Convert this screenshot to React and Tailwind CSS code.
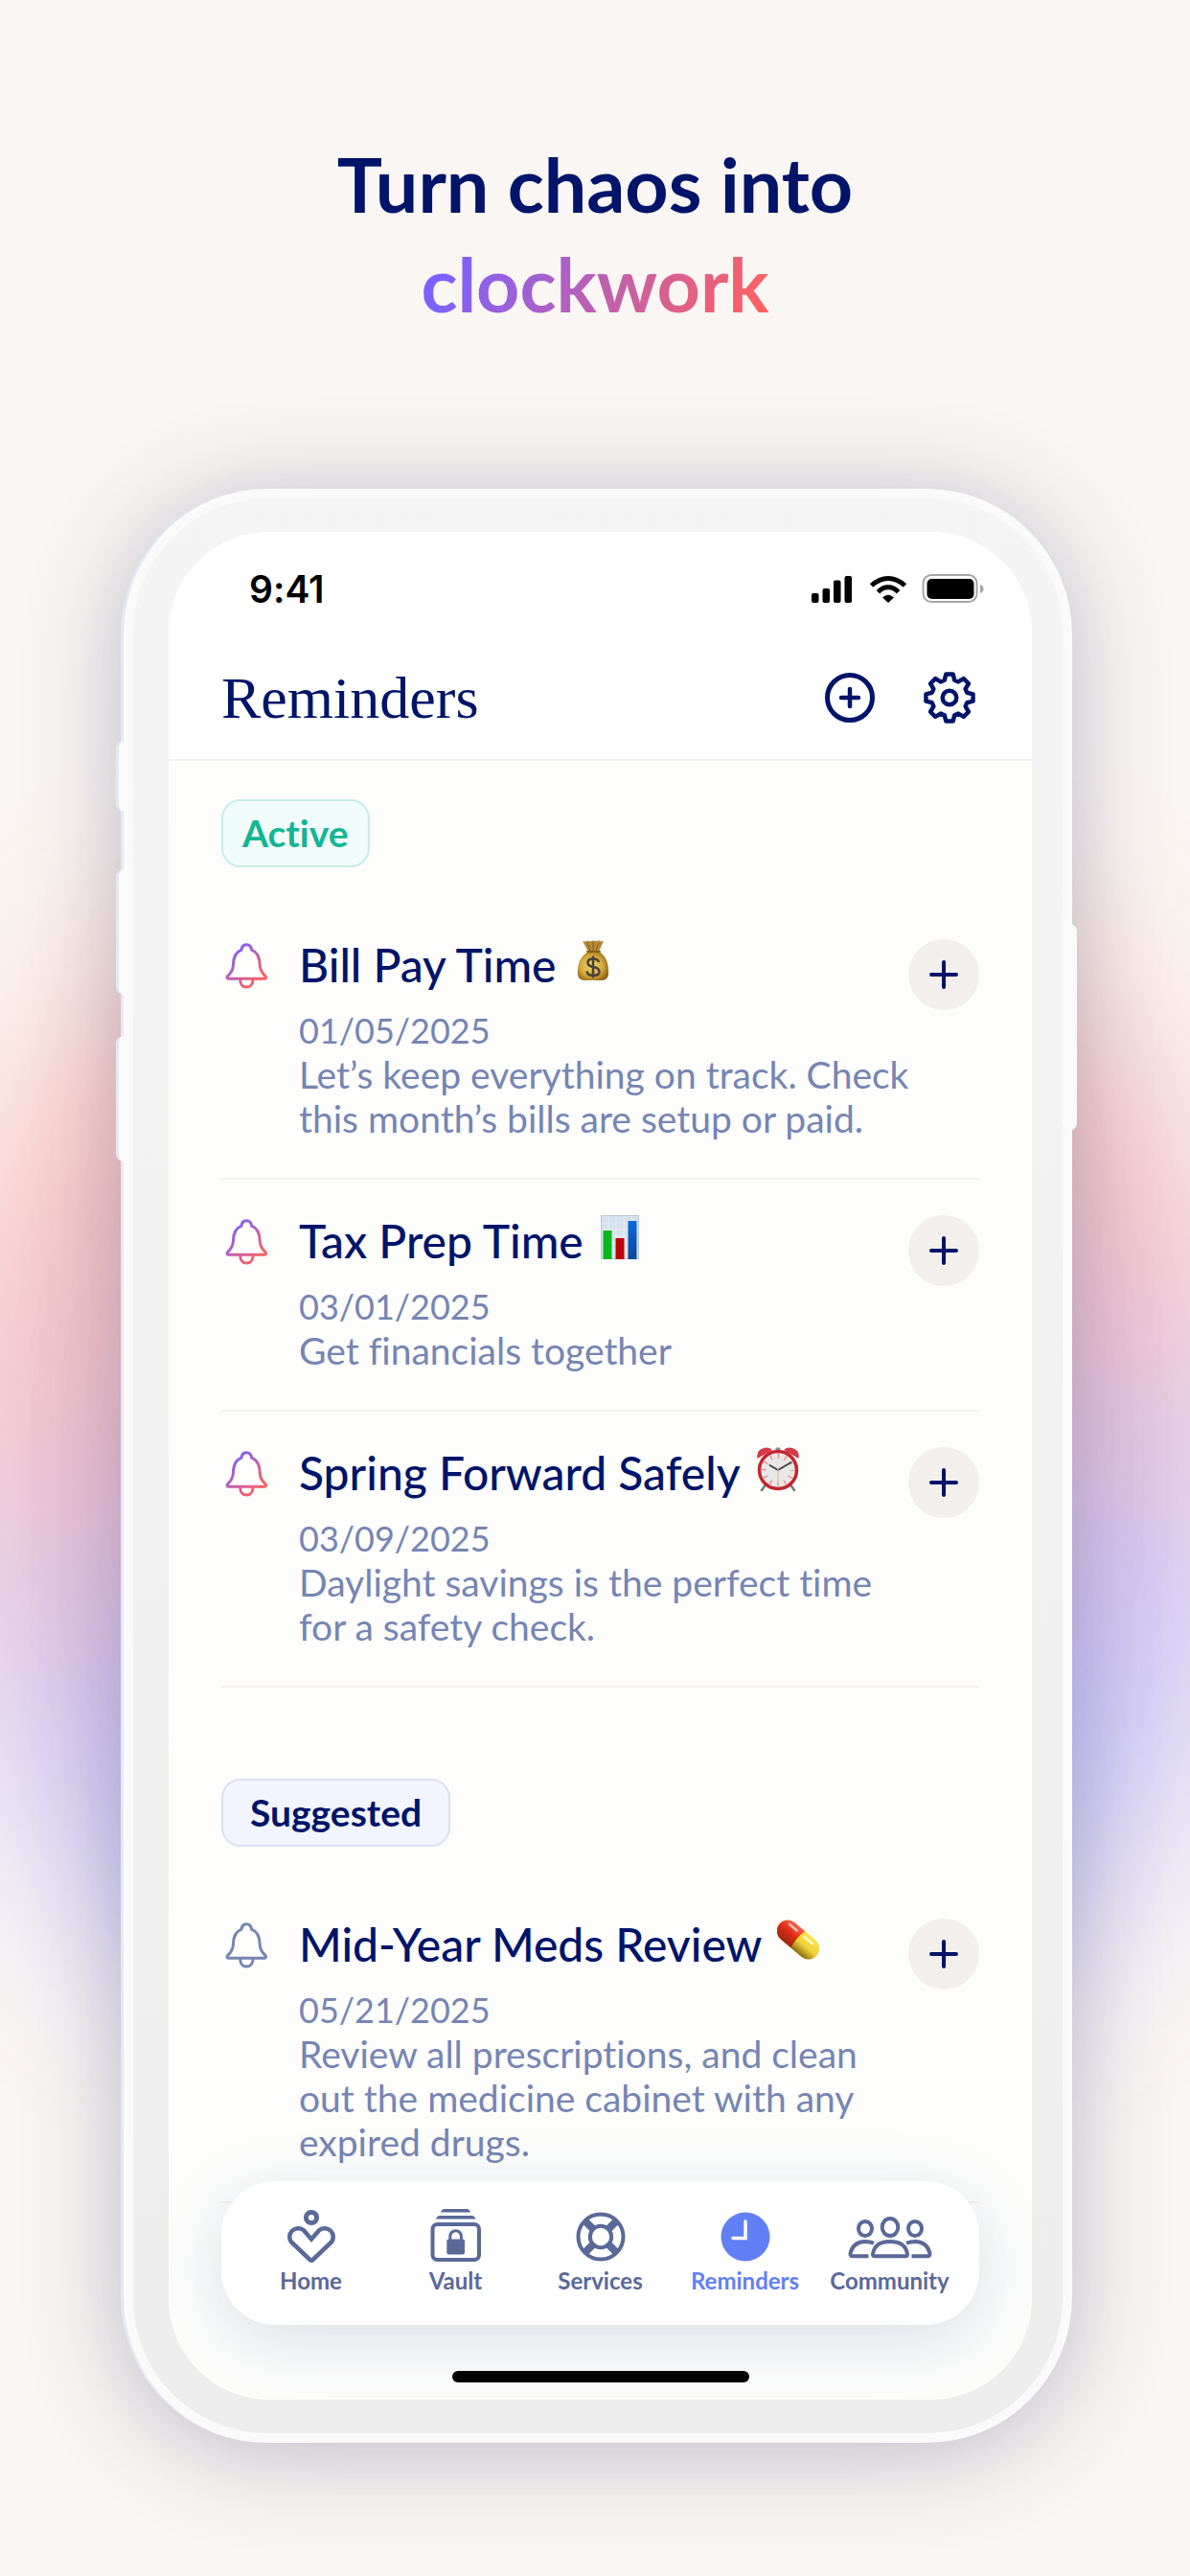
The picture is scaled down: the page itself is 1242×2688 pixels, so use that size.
const ACTIVE = [
  {
    title: 'Bill Pay Time',
    emoji: MoneyBag,
    date: '01/05/2025',
    text: 'Let’s keep everything on track. Check\nthis month’s bills are setup or paid.',
  },
  {
    title: 'Tax Prep Time',
    emoji: BarChart,
    date: '03/01/2025',
    text: 'Get financials together',
  },
  {
    title: 'Spring Forward Safely',
    emoji: AlarmClock,
    date: '03/09/2025',
    text: 'Daylight savings is the perfect time\nfor a safety check.',
  },
];

const SUGGESTED = [
  {
    title: 'Mid-Year Meds Review',
    emoji: Pill,
    date: '05/21/2025',
    text: 'Review all prescriptions, and clean\nout the medicine cabinet with any\nexpired drugs.',
  },
];

const NAV = [
  { label: 'Home', icon: HomeIcon },
  { label: 'Vault', icon: VaultIcon },
  { label: 'Services', icon: ServicesIcon },
  { label: 'Reminders', icon: ClockIcon, current: true },
  { label: 'Community', icon: CommunityIcon },
];

function MoneyBag() {
  return (
    <svg width="44" height="44" viewBox="0 0 44 44" role="img" aria-label="Money bag">
      <defs>
        <radialGradient id="bag" cx="0.45" cy="0.5" r="0.6">
          <stop offset="0" stopColor="#f0d66b" />
          <stop offset="0.6" stopColor="#d3ab3d" />
          <stop offset="1" stopColor="#8f6114" />
        </radialGradient>
      </defs>
      <path d="M11 2 Q14 3 16 1.5 Q19 3 22 1.2 Q25 3 28 1.2 Q30 3 33 2 L28 13 H17 Z" fill="#b48a35" />
      <path d="M16 4 L19 12 M22 3 V12 M28 4 L25 12" stroke="#83601c" strokeWidth="1" />
      <path d="M17 13 H28 C35 17 38 24 38 33 Q39 43 31 43 H13 Q5 43 6 33 C6 24 10 17 17 13 Z" fill="url(#bag)" />
      <path d="M16 13 H29" stroke="#8a5a18" strokeWidth="2" strokeLinecap="round" />
      <path
        d="M28 24 Q27 20.500 22 20.500 Q16.500 20.500 16.500 24.500 Q16.500 28 22 29 Q28.500 30 28.500 34 Q28.500 38 22 38 Q16 38 15.500 33.500 M22 17.500 V40.500"
        fill="none"
        stroke="#4b4038"
        strokeWidth="2.500"
      />
    </svg>
  );
}

function BarChart() {
  return (
    <svg width="44" height="46" viewBox="0 0 44 46" role="img" aria-label="Bar chart">
      <defs>
        <linearGradient id="blueBar" x1="0" y1="0" x2="0" y2="1">
          <stop offset="0" stopColor="#0a6be0" />
          <stop offset="1" stopColor="#0b4796" />
        </linearGradient>
      </defs>
      <rect x="2.500" y="0.500" width="39" height="45" fill="#d5e2ee" stroke="#b9c6d3" />
      <path d="M3 8 H41 M3 15 H41 M3 22 H41 M3 29 H41 M3 36 H41 M10 1 V45 M18 1 V45 M26 1 V45 M34 1 V45" stroke="#e3ecf5" />
      <rect x="4.500" y="16" width="9" height="30" fill="#06b81b" />
      <rect x="17.500" y="24" width="9" height="22" fill="#bb0505" />
      <rect x="30.500" y="6" width="9" height="40" fill="url(#blueBar)" />
    </svg>
  );
}

function AlarmClock() {
  return (
    <svg width="46" height="46" viewBox="0 0 46 46" role="img" aria-label="Alarm clock">
      <path d="M11 38 L6 45 M35 38 L40 45" stroke="#77777c" strokeWidth="2.500" strokeLinecap="round" />
      <path d="M1.500 12 Q0 3 8 1 Q13 -0.500 17 3 Z M44.500 12 Q46 3 38 1 Q33 -0.500 29 3 Z" fill="#d23c49" />
      <rect x="20.500" y="0.500" width="5" height="3" rx="1" fill="#8d8d92" />
      <circle cx="23" cy="24" r="19.500" fill="#e9e8e8" stroke="#c3252e" strokeWidth="3.500" />
      <circle cx="23" cy="24" r="14.500" fill="none" stroke="#f0827f" strokeWidth="5" strokeDasharray="1.200 6.392" strokeDashoffset="0.600" />
      <path d="M23 24 L14.500 19 M23 24 L36.500 16" stroke="#3d3d40" strokeWidth="1.800" strokeLinecap="round" />
      <path d="M23 21 V39" stroke="#e0c08b" strokeWidth="1.200" />
    </svg>
  );
}

function Pill() {
  return (
    <svg width="44" height="44" viewBox="0 0 44 44" role="img" aria-label="Pill">
      <defs>
        <linearGradient id="pillRed" x1="0" y1="0" x2="0" y2="1">
          <stop offset="0" stopColor="#f2644e" />
          <stop offset="0.500" stopColor="#e02a15" />
          <stop offset="1" stopColor="#9a2a12" />
        </linearGradient>
        <linearGradient id="pillYellow" x1="0" y1="0" x2="0" y2="1">
          <stop offset="0" stopColor="#fbe64f" />
          <stop offset="0.550" stopColor="#ecd03a" />
          <stop offset="1" stopColor="#8c6a0c" />
        </linearGradient>
      </defs>
      <g transform="rotate(40 22 22)">
        <path d="M22 10.500 H8 A11.500 11.500 0 0 0 8 33.500 H22 Z" fill="url(#pillRed)" />
        <path d="M22 10.500 H36 A11.500 11.500 0 0 1 36 33.500 H22 Q18.500 22 22 10.500 Z" fill="url(#pillYellow)" />
        <path d="M5 15.500 H15" stroke="#ffc2b5" strokeWidth="2.500" strokeLinecap="round" />
        <path d="M25 15.500 H36" stroke="#fff9c4" strokeWidth="2.500" strokeLinecap="round" />
      </g>
    </svg>
  );
}

function Bell({ active }) {
  return (
    <svg className="mt-0.5 ml-[3px]" width="48" height="52" viewBox="0 0 48 52" fill="none" aria-hidden="true">
      <defs>
        <linearGradient id="bell" gradientUnits="userSpaceOnUse" x1="8" y1="8" x2="38" y2="42">
          <stop offset="0" stopColor="#7b61ff" />
          <stop offset="1" stopColor="#ff6060" />
        </linearGradient>
      </defs>
      <path
        d="M4.500 39.300 C2.800 39.300 2.600 37.500 3.800 36.400 C8 32.500 9.200 30 9.400 25 C9.600 17 11.500 11.500 17.800 9.400 C18.400 5.500 20.500 3.700 23.300 3.700 C26.100 3.700 28.200 5.500 28.800 9.400 C35.100 11.500 37 17 37.200 25 C37.400 30 38.600 32.500 42.800 36.400 C44 37.500 43.800 39.300 42.100 39.300 Z M16.700 40.500 C16.700 45 19.500 48 23.300 48 S30 45 30 40.500"
        stroke={active ? 'url(#bell)' : '#7685b2'}
        strokeWidth="3"
        strokeLinejoin="round"
      />
    </svg>
  );
}

// eight teeth, four corners each
const gearPoints = Array.from({ length: 8 }, (_, i) =>
  [
    [-16, 19],
    [-8.5, 24.8],
    [8.5, 24.8],
    [16, 19],
  ].map(([angle, radius]) => {
    const a = ((i * 45 + angle) * Math.PI) / 180;
    return `${(28 + radius * Math.sin(a)).toFixed(2)},${(28 - radius * Math.cos(a)).toFixed(2)}`;
  })
)
  .flat()
  .join(' ');

function GearIcon() {
  return (
    <svg width="56" height="56" viewBox="0 0 56 56" fill="none" stroke="currentColor" strokeWidth="4.500" strokeLinejoin="round" aria-hidden="true">
      <polygon points={gearPoints} />
      <circle cx="28" cy="28" r="7.300" />
    </svg>
  );
}

function HomeIcon() {
  return (
    <svg width="56" height="58" viewBox="0 0 56 58" fill="none" stroke="currentColor" aria-hidden="true">
      <circle cx="28" cy="10" r="5.600" strokeWidth="5" />
      <path
        d="M28 32.500 L19.700 23 A9 9 0 0 0 7 35.500 L26.500 54 Q28 55.300 29.500 54 L49 35.500 A9 9 0 0 0 36.300 23 Z"
        strokeWidth="4.500"
      />
    </svg>
  );
}

function VaultIcon() {
  return (
    <svg width="54" height="58" viewBox="0 0 54 58" fill="none" stroke="currentColor" aria-hidden="true">
      <path d="M11 4.500 Q12 1 15 1 H38 Q41 1 42 4.500 Z M6 11.500 Q7 8 10 8 H43.500 Q46.500 8 47.500 11.500 Z" fill="currentColor" stroke="none" />
      <rect x="2.500" y="17" width="48.500" height="37" rx="5" strokeWidth="4" />
      <rect x="17.300" y="32.500" width="18.700" height="16" rx="2" fill="currentColor" stroke="none" />
      <path d="M20.800 33 V29.500 A5.800 5.800 0 0 1 32.400 29.500 V33" strokeWidth="3" />
    </svg>
  );
}

function ServicesIcon() {
  return (
    <svg width="56" height="58" viewBox="0 0 56 58" fill="none" stroke="currentColor" aria-hidden="true">
      <circle cx="28" cy="30" r="23.500" strokeWidth="4" />
      <circle cx="28" cy="30" r="11.200" strokeWidth="4" />
      <path d="M36 22 L44 14 M20 22 L12 14 M36 38 L44 46 M20 38 L12 46" strokeWidth="8" />
    </svg>
  );
}

function ClockIcon() {
  return (
    <svg width="56" height="58" viewBox="0 0 56 58" fill="none" aria-hidden="true">
      <circle cx="28" cy="30" r="25.500" fill="currentColor" />
      <path d="M28 14 V31.500 H15" stroke="#fff" strokeWidth="3.500" strokeLinecap="round" />
    </svg>
  );
}

function CommunityIcon() {
  return (
    <svg width="90" height="58" viewBox="0 -8 90 58" fill="none" stroke="currentColor" strokeWidth="4" strokeLinejoin="round" aria-hidden="true">
      <ellipse cx="45" cy="12" rx="8.300" ry="9" />
      <ellipse cx="19" cy="13.500" rx="7" ry="7.500" />
      <ellipse cx="71" cy="13.500" rx="7" ry="7.500" />
      <path d="M27 40 Q29 27 45 27 Q61 27 63 40 Q63 42.300 61 42.300 H29 Q27 42.300 27 40 Z" />
      <path d="M28 28.800 Q24 27 19 27 Q6 27.500 3.500 39.500 Q3.300 42.300 6 42.300 H22.500 M62 28.800 Q66 27 71 27 Q84 27.500 86.500 39.500 Q86.700 42.300 84 42.300 H67.500" />
    </svg>
  );
}

function StatusIcons() {
  return (
    <svg width="182" height="34" viewBox="0 0 182 34" role="img" aria-label="Signal, Wi-Fi and battery">
      <rect x="1" y="21" width="7.500" height="10" rx="2" />
      <rect x="12.500" y="16" width="7.500" height="15" rx="2" />
      <rect x="24" y="7.500" width="7.500" height="23.500" rx="2" />
      <rect x="35.500" y="3" width="7.500" height="28" rx="2" />
      <g fill="none" stroke="#000" strokeWidth="5">
        <path d="M63.500 13 Q72 5.500 81 5.500 T98.500 13" />
        <path d="M70.500 19.800 Q75 14.800 81 14.800 T91.500 19.800" />
      </g>
      <path d="M75 25.500 Q81 20 87 25.500 L81 31 Z" />
      <rect x="117.500" y="2" width="56" height="28" rx="8.500" fill="none" stroke="#a6a6a6" strokeWidth="2" />
      <rect x="121.500" y="6" width="49" height="21" rx="5" />
      <path d="M177 12 Q180.500 13 180.500 16.500 T177 21 Z" fill="#a6a6a6" />
    </svg>
  );
}

function Reminder({ item, active }) {
  const Emoji = item.emoji;
  return (
    <li className="grid grid-cols-[81px_1fr_74px] border-b-2 border-[#f5f1ef] pt-[37px] pb-[39px]">
      <Bell active={active} />
      <div className="whitespace-nowrap">
        <h3 className="mb-[18px] flex items-start gap-4 text-[48px] leading-[54px] font-medium text-[#001469]">
          {item.title}
          <Emoji />
        </h3>
        <p className="text-[36px] leading-[46px] text-[#7685b2]">{item.date}</p>
        <p className="text-[39px] leading-[46px] whitespace-pre text-[#7685b2]">{item.text}</p>
      </div>
      <button
        type="button"
        aria-label={`Add ${item.title}`}
        className="flex size-[74px] items-center justify-center rounded-full bg-[#f3efed] text-[#001469]"
      >
        <svg width="32" height="32" viewBox="0 0 32 32" stroke="currentColor" strokeWidth="4" strokeLinecap="round">
          <path d="M16 3 V29 M3 16 H29" />
        </svg>
      </button>
    </li>
  );
}

export default function App() {
  return (
    <div className="relative isolate min-h-screen overflow-hidden bg-[#faf6f3] pt-[140px] pb-[138px] font-['Lato',sans-serif] [font-variant-ligatures:none]">
      <h1 className="text-center text-[79px] leading-[104px] font-bold text-[#001469]">
        Turn chaos into
        <br />
        <span className="bg-linear-[115deg,#7b61ff_10%,#ff6060_95%] bg-clip-text text-transparent">clockwork</span>
      </h1>

      <div className="relative mt-[162px] pr-[123px] pl-[126px]">
        {/* coloured glow behind the phone */}
        <div className="absolute -inset-x-[80px] top-[330px] -z-10 h-[1350px] rounded-full bg-linear-[172deg,#ff7a6b_20%,#e0708c_42%,#c070c0_54%,#8078ff_66%,#8078ff_100%] opacity-40 blur-[100px]" />

        {/* side buttons */}
        <div className="absolute top-[263px] left-[121px] h-[74px] w-4 rounded-lg border-l-3 border-[#e6e8f1] bg-[#fafafa]" />
        <div className="absolute top-[397px] left-[121px] h-[131px] w-4 rounded-lg border-l-3 border-[#e6e8f1] bg-[#fafafa]" />
        <div className="absolute top-[571px] left-[121px] h-[131px] w-4 rounded-lg border-l-3 border-[#e6e8f1] bg-[#fafafa]" />
        <div className="absolute top-[454px] right-[118px] h-[216px] w-4 rounded-lg bg-[#fafafa]" />

        <div className="rounded-[152px] border-l-3 border-[#e6e8f1] bg-[#fafafa] p-[10px] shadow-[0_10px_100px_rgba(45,45,95,0.3)]">
          <div className="rounded-[140px] bg-linear-to-b from-[#f5f5f5] to-[#ededed] py-[35px] pr-8 pl-[37px]">
            <div className="relative overflow-hidden rounded-[105px] bg-[#fdfdfc]">
              <header className="border-b-2 border-[#f5f1ef] bg-white">
                <div className="flex items-center justify-between pt-[36px] pr-[49px] pl-[84px]">
                  <span className="font-['Inter',sans-serif] text-[39px] leading-[48px] font-semibold text-black">9:41</span>
                  <StatusIcons />
                </div>
                <div className="flex items-center justify-between px-[55px] pt-[51px] pb-[26px]">
                  <h2 className="font-['Liberation_Serif',serif] text-[62px] leading-[76px] text-[#001469]">Reminders</h2>
                  <div className="flex items-center gap-[48px] pr-[3px] text-[#001469]">
                    <button type="button" aria-label="Add reminder">
                      <svg width="56" height="56" viewBox="0 0 56 56" fill="none" stroke="currentColor" strokeWidth="4.500" strokeLinecap="round">
                        <circle cx="28" cy="28" r="23.500" strokeWidth="5" />
                        <path d="M28 19 V37 M19 28 H37" />
                      </svg>
                    </button>
                    <button type="button" aria-label="Settings">
                      <GearIcon />
                    </button>
                  </div>
                </div>
              </header>

              <main className="px-[55px] pt-10 pb-[205px]">
                <section>
                  <h2 className="mb-[38px] inline-flex h-[71px] items-center rounded-[20px] border-2 border-[#c5eee4] bg-[#f2fcfb] px-[20px] text-[39px] font-bold text-[#12b594]">
                    Active
                  </h2>
                  <ul>
                    {ACTIVE.map((item) => (
                      <Reminder key={item.title} item={item} active />
                    ))}
                  </ul>
                </section>
                <section className="mt-[95px]">
                  <h2 className="mb-[38px] inline-flex h-[71px] items-center rounded-[20px] border-2 border-[#dbe0f0] bg-[#f2f5fe] px-[28px] text-[39px] font-bold text-[#001469]">
                    Suggested
                  </h2>
                  <ul>
                    {SUGGESTED.map((item) => (
                      <Reminder key={item.title} item={item} />
                    ))}
                  </ul>
                </section>
              </main>

              <nav className="absolute inset-x-[55px] bottom-[78px] grid grid-cols-5 rounded-[56px] bg-white px-[18px] pt-7 pb-8 shadow-[0_16px_70px_rgba(40,60,110,0.16)]">
                {NAV.map(({ label, icon: Icon, current }) => (
                  <a
                    key={label}
                    href={`#${label.toLowerCase()}`}
                    aria-current={current ? 'page' : undefined}
                    className={`flex flex-col items-center gap-1 text-[24px] leading-7 font-bold ${current ? 'text-[#6280f5]' : 'text-[#5a6998]'}`}
                  >
                    <Icon />
                    {label}
                  </a>
                ))}
              </nav>
              <div className="absolute bottom-[18px] left-1/2 h-3 w-[310px] -translate-x-1/2 rounded-full bg-black" />
            </div>
          </div>
        </div>
      </div>
    </div>
  );
}
